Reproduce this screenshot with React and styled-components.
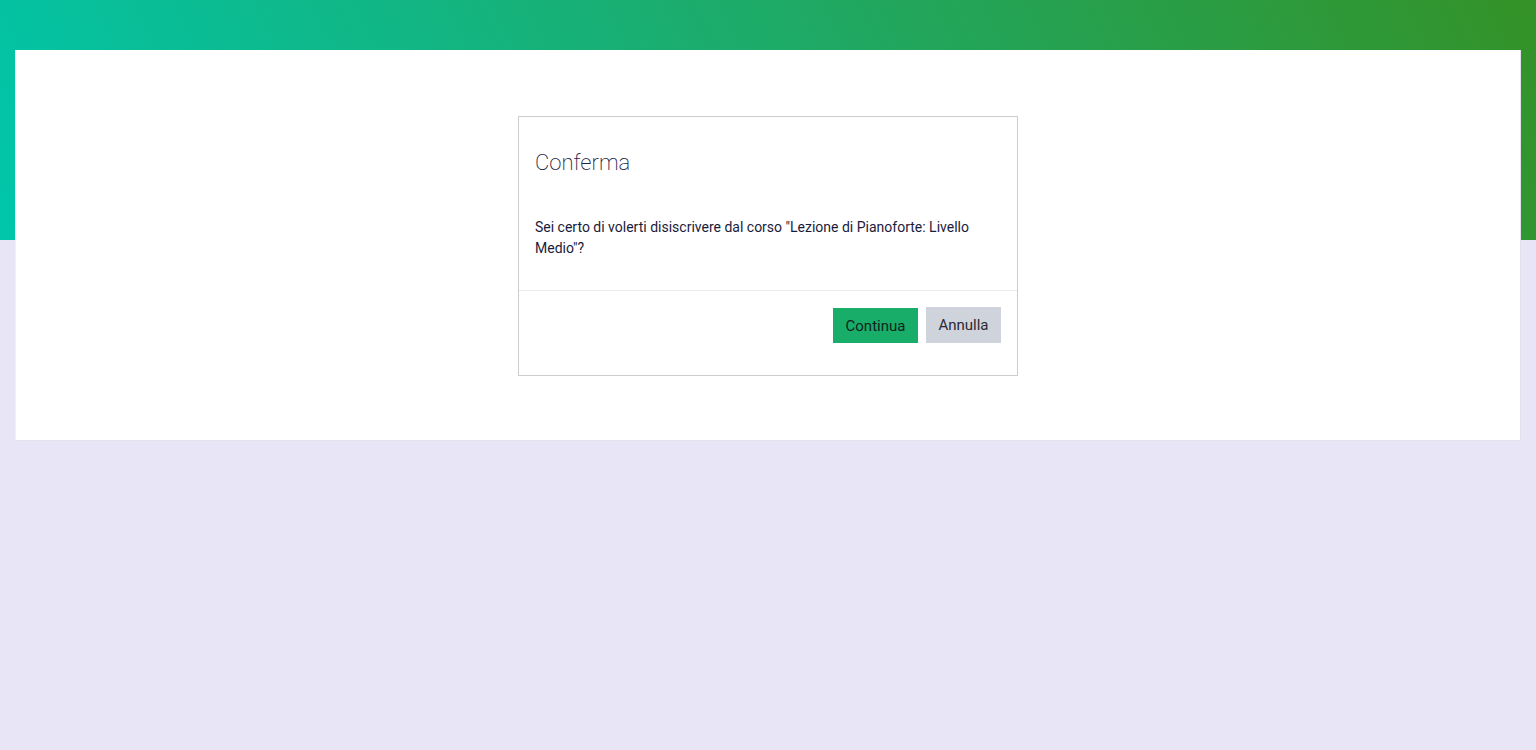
import React from 'react';
import styled, { createGlobalStyle } from 'styled-components';

const GlobalStyle = createGlobalStyle`
    html, body {
        margin: 0;
        padding: 0;
    }
    body {
        font-family: Roboto, "Liberation Sans", Arial, sans-serif;
        background: #e8e6f6;
    }
`;

const Page = styled.div`
    min-height: 750px;
    padding-top: 50px;
    box-sizing: border-box;
    background-color: #e8e6f6;
    background-image: linear-gradient(62deg, #00c6ab 0%, #1cac6c 50%, #349227 100%);
    background-size: 100% 240px;
    background-repeat: no-repeat;
`;

const Card = styled.div`
    margin: 0 15px;
    padding: 66px 0 64px;
    background: #ffffff;
    border: 1px solid #e2e1ec;
    border-top: none;
    border-left-color: #f1f1f6;
    display: flex;
    justify-content: center;
`;

const Dialog = styled.div`
    width: 500px;
    box-sizing: border-box;
    border: 1px solid #cccccc;
    background: #ffffff;
`;

const Header = styled.div`
    padding: 33px 16px 0;
`;

const Title = styled.h2`
    margin: 0;
    font-size: 22px;
    line-height: 26px;
    font-weight: 200;
    color: #1e2240;
`;

const Body = styled.div`
    padding: 41px 16px 31px;
    font-size: 14px;
    line-height: 21px;
    color: #1a1b3a;
`;

const Footer = styled.div`
    border-top: 1px solid #ebebeb;
    padding: 16px 16px 32px;
    display: flex;
    justify-content: flex-end;
    align-items: flex-end;
    gap: 8px;
`;

const Button = styled.button`
    font-family: Roboto, "Liberation Sans", Arial, sans-serif;
    font-size: 15px;
    border: none;
    border-radius: 0;
    padding: 0 12.5px;
    height: ${props => props.primary ? '35px' : '36px'};
    background: ${props => props.primary ? '#19ad6a' : '#cfd3db'};
    color: ${props => props.primary ? '#10241a' : '#2a2a35'};
    cursor: pointer;
`;

export default function App() {
    return (
        <>
            <GlobalStyle />
            <Page>
                <Card>
                    <Dialog>
                        <Header>
                            <Title>Conferma</Title>
                        </Header>
                        <Body>
                            Sei certo di volerti disiscrivere dal corso "Lezione di Pianoforte: Livello Medio"?
                        </Body>
                        <Footer>
                            <Button primary>Continua</Button>
                            <Button>Annulla</Button>
                        </Footer>
                    </Dialog>
                </Card>
            </Page>
        </>
    );
}
